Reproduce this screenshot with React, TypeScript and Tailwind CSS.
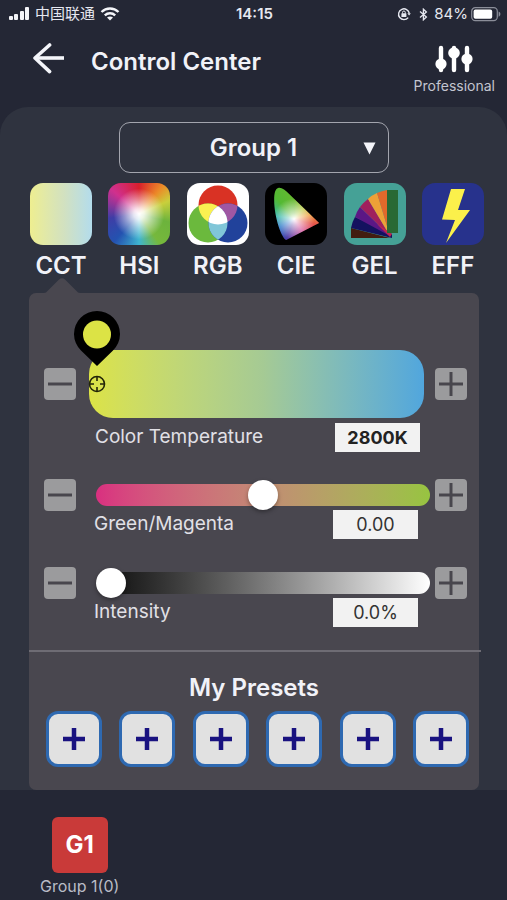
import { useState } from "react";
import type { ReactNode } from "react";

function StatusBar() {
  return (
    <div className="grid h-7 grid-cols-3 items-center pl-2 pr-1.5 text-[15px] leading-5 text-[#e6e8f0]">
      <div className="flex items-center gap-[5px]">
        <svg width="22" height="14" viewBox="0 0 22 14" fill="#f4f5f9" aria-hidden="true">
          <rect x="1" y="9" width="4" height="4" rx="1" />
          <rect x="6" y="7" width="4" height="6" rx="1" />
          <rect x="12" y="4" width="4" height="9" rx="1" />
          <rect x="17" y="0" width="4" height="13" rx="1" />
        </svg>
        <span className="whitespace-nowrap">中国联通</span>
        <svg width="20" height="14" viewBox="0 0 20 14" fill="none" stroke="#f4f5f9" strokeWidth="2.4" aria-hidden="true">
          <path d="M1.5 5 C6.3 0.4 13.7 0.4 18.5 5" />
          <path d="M4.8 8.4 C7.8 5.6 12.2 5.6 15.2 8.4" />
          <path d="M7 10.6 C8.8 9.2 11.2 9.2 13 10.6 L10 13.6 Z" fill="#f4f5f9" stroke="none" />
        </svg>
      </div>
      <div className="text-center font-semibold">14:15</div>
      <div className="flex items-center justify-end">
        <svg className="mr-2" width="14" height="14" viewBox="0 0 14 14" fill="none" stroke="#e6e8f0" strokeWidth="1.4" aria-hidden="true">
          <path d="M11.2 10.6 A5.4 5.4 0 1 1 12.3 6.4" />
          <path d="M10.4 6.2 h3.4 l-1.7 2.4 z" fill="#e6e8f0" stroke="none" />
          <rect x="4.4" y="6.3" width="5" height="3.6" rx="0.5" fill="#e6e8f0" stroke="none" />
          <path d="M5.5 6.5 V5.4 a1.4 1.4 0 0 1 2.8 0 V6.5" strokeWidth="1" />
        </svg>
        <svg className="mr-1.5" width="9" height="13" viewBox="0 0 9 13" fill="none" stroke="#e6e8f0" strokeWidth="1.3" aria-hidden="true">
          <path d="M1 3.6 L7.4 9 L4.4 11.8 V1.2 L7.4 4 L1 9.4" />
        </svg>
        <span className="mr-[3px]">84%</span>
        <svg width="30" height="15" viewBox="0 0 30 15" aria-hidden="true">
          <rect x="0.7" y="0.7" width="25.6" height="13" rx="3.6" fill="none" stroke="#8b8e99" strokeWidth="1.2" />
          <rect x="2.6" y="2.6" width="18.6" height="9.2" rx="1.8" fill="#fff" />
          <path d="M27.6 4.6 C30 5.6 30 8.8 27.6 9.8 Z" fill="#8b8e99" />
        </svg>
      </div>
    </div>
  );
}

function Header() {
  return (
    <header className="flex h-[79px] items-start pl-[31px] pr-3">
      <button type="button" aria-label="Back" className="mt-[14px]">
        <svg width="36" height="32" viewBox="0 0 36 32" fill="none" stroke="#f4f5fa" strokeWidth="3.6" strokeLinecap="round" strokeLinejoin="round">
          <path d="M18.6 3 L4 16 L18.6 29.6" />
          <path d="M4 16 H33" strokeLinecap="butt" />
        </svg>
      </button>
      <h1 className="ml-6 mt-[18px] text-[24px] font-semibold leading-8 text-[#f1f2f8]">Control Center</h1>
      <button type="button" className="ml-auto mt-4 flex flex-col items-center text-[14px] leading-5 text-[#c3c5d0]">
        <svg width="40" height="30" viewBox="0 0 40 30" fill="#fff" stroke="#fff" strokeWidth="4.4" strokeLinecap="round" aria-hidden="true">
          <path d="M7 4 V26 M20 4 V26 M33 4 V26" />
          <circle cx="7" cy="20" r="5.6" stroke="none" />
          <circle cx="20" cy="9" r="5.8" stroke="none" />
          <circle cx="33" cy="15" r="5.6" stroke="none" />
        </svg>
        <span className="mt-0.5">Professional</span>
      </button>
    </header>
  );
}

function RgbIcon() {
  return (
    <svg viewBox="0 0 62 62" className="size-full bg-white">
      <defs>
        <clipPath id="red-area"><circle cx="31" cy="22" r="19.5" /></clipPath>
        <clipPath id="green-area"><circle cx="21" cy="40" r="19.5" /></clipPath>
      </defs>
      <circle cx="31" cy="22" r="19.5" fill="#d93224" />
      <circle cx="21" cy="40" r="19.5" fill="#6bb93d" />
      <circle cx="41" cy="40" r="19.5" fill="#21429b" />
      <circle cx="21" cy="40" r="19.5" fill="#faf151" clipPath="url(#red-area)" />
      <circle cx="41" cy="40" r="19.5" fill="#9f57a3" clipPath="url(#red-area)" />
      <g clipPath="url(#green-area)">
        <circle cx="41" cy="40" r="19.5" fill="#80c6d8" />
        <circle cx="41" cy="40" r="19.5" fill="#fff" clipPath="url(#red-area)" />
      </g>
    </svg>
  );
}

function GelIcon() {
  return (
    <svg viewBox="0 0 62 62" className="size-full bg-[#45a196]">
      <path d="M46 55 L7 55 L7 45 Z" fill="#421d10" />
      <path d="M48 55 L7 45 Q8 39 11 34 L48 51 Z" fill="#14125f" />
      <path d="M46 53 L11 34 Q13 28 16 24 Z" fill="#5b1785" />
      <path d="M46 53 L16 24 Q20 19 24 16 Z" fill="#a0205d" />
      <path d="M46 53 L24 16 Q28 12 33 10 Z" fill="#eda137" />
      <path d="M46 53 L33 10 Q38 8 43 7 L44 50 Z" fill="#e2692b" />
      <path d="M33 41 L46 54 L48 51 Z" fill="#c3264d" />
      <rect x="43" y="7" width="11" height="43" fill="#296934" />
    </svg>
  );
}

const modes: { name: string; icon: ReactNode }[] = [
  {
    name: "CCT",
    icon: <div className="size-full bg-linear-to-r from-[#eeee90] via-[#d2e1c0] via-55% to-[#b3dcec]" />,
  },
  {
    name: "HSI",
    icon: (
      <div className="size-full bg-[radial-gradient(circle,#ffffff_0%,#ffffffdd_12%,#ffffff77_32%,#ffffff00_58%),conic-gradient(#d81f2c,#ec8a28_40deg,#c9cf3c_66deg,#6cb33c_105deg,#76b83c_145deg,#3fb5d0_180deg,#2452b0_222deg,#3f3da6_262deg,#d0308e_312deg,#d81f2c)]" />
    ),
  },
  { name: "RGB", icon: <RgbIcon /> },
  {
    name: "CIE",
    icon: (
      <div className="size-full bg-black">
        <div className="size-full bg-[radial-gradient(circle_at_29px_36px,#ffffff_0%,#ffffffaa_12%,#ffffff00_42%),conic-gradient(from_0deg_at_29px_36px,#67b82f,#b6c934_40deg,#f0a13c_75deg,#e5524b_105deg,#d34a96_145deg,#4d3ba5_200deg,#2673c8_240deg,#36b8a8_280deg,#53b934_320deg,#67b82f)] [clip-path:path('M13_5_C16_4_20_7_24_11_L54_40_L21_57_C17_56_9_35_9_17_C9_10_10_6_13_5_Z')]" />
      </div>
    ),
  },
  { name: "GEL", icon: <GelIcon /> },
  {
    name: "EFF",
    icon: (
      <svg viewBox="0 0 62 62" className="size-full bg-[#27328c]">
        <path d="M29 6 H43 L36 27 H48 L24 60 L33 37 L20 36.500 Z" fill="#fbf04b" />
      </svg>
    ),
  },
];

function StepButton({ kind, label }: { kind: "minus" | "plus"; label: string }) {
  return (
    <button type="button" aria-label={label} className="size-8 shrink-0 rounded-[4px] bg-[#9b9b9d]">
      <svg viewBox="0 0 32 32" fill="none" stroke="#48464d" strokeWidth="3">
        <path d="M4 16 H28" />
        {kind === "plus" && <path d="M16 4 V28" />}
      </svg>
    </button>
  );
}

function ValueRow({ id, label, value, bold }: { id: string; label: string; value: string; bold?: boolean }) {
  return (
    <div className="flex items-center justify-between">
      <label htmlFor={id} className="text-[19px] leading-[30px] text-[#e1e0e6]">{label}</label>
      <input
        id={id}
        type="text"
        defaultValue={value}
        className={
          bold
            ? "h-[29px] w-[85px] bg-[#f2f2f2] text-center text-[18px] font-bold text-[#222]"
            : "h-[29px] w-[85px] bg-[#f2f2f2] text-center text-[18px] text-[#333]"
        }
      />
    </div>
  );
}

function Slider({ id, label, value, start, track }: { id: string; label: string; value: string; start: number; track: string }) {
  return (
    <div className="flex items-start pl-[15px] pr-3">
      <StepButton kind="minus" label={`Decrease ${label}`} />
      <div className="ml-[18px] mr-[5px] min-w-0 flex-1">
        <div className="flex h-8 items-center pl-0.5">
          <input
            type="range"
            aria-label={label}
            min={0}
            max={100}
            defaultValue={start}
            className={`h-[30px] w-full appearance-none bg-transparent [&::-webkit-slider-runnable-track]:h-[22px] [&::-webkit-slider-runnable-track]:rounded-full [&::-webkit-slider-thumb]:-mt-1 [&::-webkit-slider-thumb]:size-[30px] [&::-webkit-slider-thumb]:appearance-none [&::-webkit-slider-thumb]:rounded-full [&::-webkit-slider-thumb]:bg-white [&::-webkit-slider-thumb]:shadow-[0_2px_4px_rgba(0,0,0,0.35)] ${track}`}
          />
        </div>
        <div className="-mt-0.5 pr-3">
          <ValueRow id={id} label={label} value={value} />
        </div>
      </div>
      <StepButton kind="plus" label={`Increase ${label}`} />
    </div>
  );
}

function TemperatureSlider() {
  return (
    <div className="flex items-start pl-[15px] pr-3">
      <div className="pt-[18px]">
        <StepButton kind="minus" label="Decrease Color Temperature" />
      </div>
      <div className="ml-[13px] mr-[11px] min-w-0 flex-1">
        <div className="relative">
          <input
            type="range"
            aria-label="Color Temperature"
            min={2800}
            max={10000}
            defaultValue={2800}
            className="block h-[68px] w-full appearance-none rounded-[24px] bg-linear-to-r from-[#dce345] via-[#a5ca94] via-52% to-[#51a6dd] [&::-webkit-slider-thumb]:size-4 [&::-webkit-slider-thumb]:appearance-none"
          />
          <svg className="pointer-events-none absolute -left-4 -top-10 h-[84px] w-12" viewBox="0 0 48 84" fill="none" aria-hidden="true">
            <path d="M24 56 L8 40.500 A23 23 0 1 1 40 40.500 Z" fill="#000" />
            <circle cx="24" cy="24.500" r="14" fill="#dce345" />
            <circle cx="24" cy="74" r="7.500" stroke="#222508" strokeWidth="1.600" />
            <path d="M24 66 V71 M24 77 V82 M16 74 H21 M27 74 H32" stroke="#222508" strokeWidth="1.600" />
          </svg>
        </div>
        <div className="pl-1.5 pr-1 pt-1">
          <ValueRow id="temperature" label="Color Temperature" value="2800K" bold />
        </div>
      </div>
      <div className="pt-[18px]">
        <StepButton kind="plus" label="Increase Color Temperature" />
      </div>
    </div>
  );
}

export default function App() {
  const [mode, setMode] = useState("CCT");

  return (
    <div className="flex min-h-screen flex-col bg-[#242735] font-['Inter','Noto_Sans_CJK_SC',sans-serif]">
      <StatusBar />
      <Header />
      <main className="rounded-t-[28px] bg-[#2f333f] pt-[15px]">
        <div className="relative mx-auto w-[270px]">
          <select
            aria-label="Group"
            className="h-[51px] w-full appearance-none rounded-[11px] border border-[#a3a5ae] bg-transparent text-center text-[24px] font-semibold text-[#f1f2f8] [text-align-last:center]"
          >
            <option>Group 1</option>
          </select>
          <svg className="pointer-events-none absolute right-[13px] top-5" width="13" height="13" viewBox="0 0 13 13" fill="#f4f5fa" aria-hidden="true">
            <path d="M0.500 0.500 H12.500 L6.500 12.500 Z" />
          </svg>
        </div>

        <nav className="mt-2.5 flex justify-between pl-[30px] pr-[23px]">
          {modes.map(({ name, icon }) => (
            <button
              key={name}
              type="button"
              aria-pressed={mode === name}
              onClick={() => setMode(name)}
              className="relative flex h-[110px] w-[62px] flex-col items-center"
            >
              <span className="block size-[62px] overflow-hidden rounded-[13px]">{icon}</span>
              <span className="mt-[5px] text-[24px] font-semibold leading-8 text-[#f1f2f8]">{name}</span>
              {mode === name && (
                <svg className="absolute bottom-0 left-[14px]" width="36" height="15" viewBox="0 0 36 15" fill="#49474f" aria-hidden="true">
                  <path d="M0 15 Q2 15 4 12.500 L15 1.500 Q18 -1 21 1.500 L32 12.500 Q34 15 36 15 Z" />
                </svg>
              )}
            </button>
          ))}
        </nav>

        <section className="ml-[29px] mr-7 rounded-[7px] bg-[#49474f] pb-[23px] pt-[57px]">
          <TemperatureSlider />
          <div className="mt-[27px]">
            <Slider
              id="tint"
              label="Green/Magenta"
              value="0.00"
              start={50}
              track="[&::-webkit-slider-runnable-track]:bg-linear-to-r [&::-webkit-slider-runnable-track]:from-[#d92f80] [&::-webkit-slider-runnable-track]:via-[#c28b74] [&::-webkit-slider-runnable-track]:to-[#97c440]"
            />
          </div>
          <div className="mt-7">
            <Slider
              id="intensity"
              label="Intensity"
              value="0.0%"
              start={0}
              track="[&::-webkit-slider-runnable-track]:bg-linear-to-r [&::-webkit-slider-runnable-track]:from-[#0c0c0c] [&::-webkit-slider-runnable-track]:to-white"
            />
          </div>
          <hr className="-mr-0.5 mt-[23px] border-t-2 border-[#6e6c74]" />
          <h2 className="mt-5 text-center text-[24px] font-semibold leading-8 text-[#f1f2f8]">My Presets</h2>
          <div className="mt-[7px] flex justify-between pl-[17px] pr-2.5">
            {[1, 2, 3, 4, 5, 6].map((n) => (
              <button
                key={n}
                type="button"
                aria-label={`Add preset ${n}`}
                className="size-14 rounded-[12px] border-[3px] border-[#2e69b1] bg-[#e1e1e1]"
              >
                <svg viewBox="0 0 50 50" fill="none" stroke="#191280" strokeWidth="4.500">
                  <path d="M14 25 H36 M25 14 V36" />
                </svg>
              </button>
            ))}
          </div>
        </section>
      </main>

      <footer className="flex flex-1 pl-10 pt-[27px]">
        <button type="button" className="flex flex-col items-center">
          <span className="flex size-14 items-center justify-center rounded-[6px] bg-[#c93a39] text-[24px] font-bold text-white">G1</span>
          <span className="mt-[3px] text-[16px] leading-5 text-[#b9bbc6]">Group 1(0)</span>
        </button>
      </footer>
    </div>
  );
}
